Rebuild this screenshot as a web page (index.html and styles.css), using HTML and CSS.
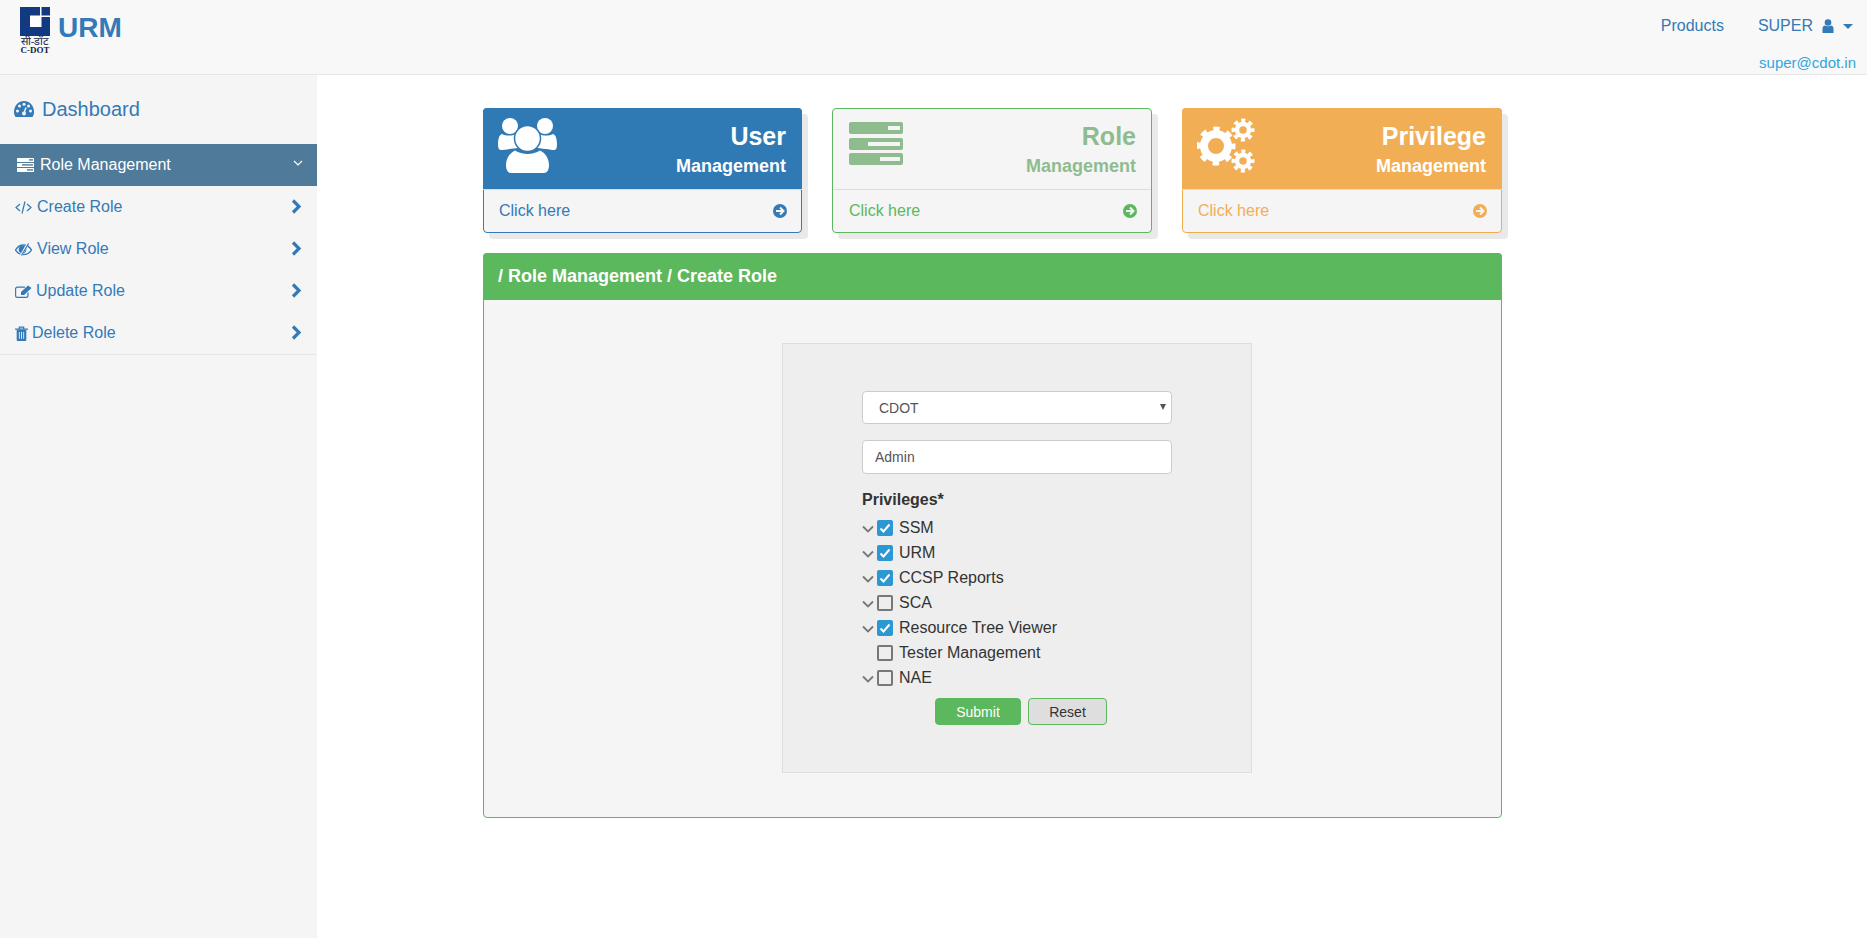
FILE: index.html
```html
<!DOCTYPE html>
<html lang="en">
  <head>
    <meta charset="UTF-8" />
    <meta name="viewport" content="width=device-width, initial-scale=1.0" />
    <title>URM</title>
    <link rel="stylesheet" href="styles.css">
  </head>

  <body>
    <svg class="defs" width="0" height="0">
      <symbol id="i-chevron" viewBox="0 0 11 15">
        <path d="M2 1.500L8 7.500L2 13.500" fill="none" stroke="currentColor" stroke-width="3.200" />
      </symbol>
      <symbol id="i-go" viewBox="0 0 14 14">
        <circle cx="7" cy="7" r="7" fill="currentColor" />
        <path d="M3 7H10M7 3.500L10.500 7L7 10.500" fill="none" stroke="#f5f5f5" stroke-width="2" />
      </symbol>
      <symbol id="i-tree" viewBox="0 0 12 8">
        <path d="M1 1.500L6 6.500L11 1.500" fill="none" stroke="#777" stroke-width="1.800" />
      </symbol>
      <symbol id="i-check" viewBox="0 0 16 16">
        <path d="M3.500 8.500L6.500 11.500L12.500 4.500" fill="none" stroke="#fff" stroke-width="2" />
      </symbol>
    </svg>

    <header class="topbar">
      <div class="brand">
        <div class="logo">
          <svg class="logo-mark" viewBox="0 0 30 29">
            <rect width="30" height="29" fill="#123a80" />
            <rect x="10" y="10" width="10" height="10" fill="#fff" />
            <rect x="20" y="0" width="1.500" height="20" fill="#fff" />
            <rect x="10" y="8.500" width="20" height="1.500" fill="#fff" />
          </svg>
          <span class="logo-hi">सी-डॉट</span>
          <span class="logo-en">C-DOT</span>
        </div>
        <span class="brand-name">URM</span>
      </div>
      <div class="top-right">
        <nav class="top-nav">
          <a href="#">Products</a>
          <a href="#" class="user-link">SUPER
            <svg class="user-icon" viewBox="0 0 12 14">
              <circle cx="6" cy="3.500" r="3.300" fill="currentColor" />
              <path d="M0.500 14V9.500C0.500 7.500 2 6.500 3 6.500C4 7.500 8 7.500 9 6.500C10 6.500 11.500 7.500 11.500 9.500V14Z" fill="currentColor" />
            </svg>
            <span class="caret"></span>
          </a>
        </nav>
        <a href="#" class="email">super@cdot.in</a>
      </div>
    </header>

    <div class="layout">
      <aside class="sidebar">
        <a href="#" class="dash-link">
          <svg class="dash-icon" viewBox="0 0 20 16">
            <path d="M0 11C0 4.500 4.500 0 10 0S20 4.500 20 11C20 13 19.500 14.500 18.500 16H1.500C0.500 14.500 0 13 0 11Z" fill="currentColor" />
            <circle cx="3.500" cy="10" r="1.500" fill="#f5f5f5" />
            <circle cx="5.500" cy="5" r="1.500" fill="#f5f5f5" />
            <circle cx="10" cy="3.200" r="1.500" fill="#f5f5f5" />
            <circle cx="14.500" cy="5" r="1.500" fill="#f5f5f5" />
            <circle cx="16.500" cy="10" r="1.500" fill="#f5f5f5" />
            <path d="M10 12L12 6.500" stroke="#f5f5f5" stroke-width="1.500" />
            <circle cx="10" cy="12.500" r="2" fill="#f5f5f5" />
          </svg>
          Dashboard
        </a>

        <ul class="menu">
          <li class="menu-head">
            <span class="menu-label">
              <svg class="tasks-icon" viewBox="0 0 17 14">
                <rect width="17" height="4" rx="0.500" fill="#fff" />
                <rect y="5" width="17" height="4" rx="0.500" fill="#fff" />
                <rect y="10" width="17" height="4" rx="0.500" fill="#fff" />
                <rect x="12" y="1.200" width="4" height="1.400" fill="#4f7a9a" />
                <rect x="5" y="6.200" width="11" height="1.400" fill="#4f7a9a" />
                <rect x="10" y="11.200" width="6" height="1.400" fill="#4f7a9a" />
              </svg>
              Role Management
            </span>
            <svg class="menu-down" viewBox="0 0 10 6">
              <path d="M1 1L5 5L9 1" fill="none" stroke="#fff" stroke-width="1.200" />
            </svg>
          </li>
          <li class="menu-item">
            <a href="#">
              <svg class="item-icon" viewBox="0 0 17 13">
                <path d="M5 3L1 6.500L5 10M12 3L16 6.500L12 10M10 0.500L7 12.500" fill="none" stroke="currentColor" stroke-width="1.200" />
              </svg>
              Create Role
            </a>
            <svg class="chev"><use href="#i-chevron" /></svg>
          </li>
          <li class="menu-item">
            <a href="#">
              <svg class="item-icon" viewBox="0 0 17 13">
                <path d="M0.500 7C2.500 3.500 5 2 8.500 2C12 2 14.500 3.500 16.500 7C14.500 10 12 11.500 8.500 11.500C5 11.500 2.500 10 0.500 7Z" fill="none" stroke="currentColor" stroke-width="1.300" />
                <circle cx="7.500" cy="6.500" r="3.800" fill="currentColor" />
                <path d="M13 0.500L6 12.500" stroke="#f5f5f5" stroke-width="2.400" />
                <path d="M13.500 0.500L6.500 12.500" stroke="currentColor" stroke-width="1.200" />
              </svg>
              View Role
            </a>
            <svg class="chev"><use href="#i-chevron" /></svg>
          </li>
          <li class="menu-item">
            <a href="#" class="update-link">
              <svg class="item-icon" viewBox="0 0 17 13">
                <path d="M13 7.500V10.500C13 11.700 12.300 12.400 11 12.400H2.500C1.300 12.400 0.600 11.700 0.600 10.500V4C0.600 2.800 1.300 2.100 2.500 2.100H10" fill="none" stroke="currentColor" stroke-width="1.200" />
                <path d="M6 7L13 0.500L16.500 3L9 10H6Z" fill="currentColor" />
              </svg>
              Update Role
            </a>
            <svg class="chev"><use href="#i-chevron" /></svg>
          </li>
          <li class="menu-item">
            <a href="#" class="trash-link">
              <svg class="trash-icon" viewBox="0 0 12 14">
                <path d="M0 3H12M4 3V1H8V3" fill="none" stroke="currentColor" stroke-width="1.200" />
                <path d="M1.500 3.500H10.500V12.500C10.500 13.300 10 14 9.500 14H2.500C2 14 1.500 13.300 1.500 12.500Z" fill="currentColor" />
                <path d="M4 5.500V12M6 5.500V12M8 5.500V12" stroke="#f5f5f5" stroke-width="0.800" />
              </svg>
              Delete Role
            </a>
            <svg class="chev"><use href="#i-chevron" /></svg>
          </li>
        </ul>
      </aside>

      <main class="content">
        <section class="cards">
          <div class="card card-user">
            <div class="card-top">
              <svg class="card-icon" viewBox="0 0 60 56">
                <circle cx="12" cy="8" r="8" fill="#fff" />
                <circle cx="47" cy="8" r="8" fill="#fff" />
                <path d="M0 27C0 21 1 17 4 16C8 18 14 18 18 16L22 30C16 30 6 32 3 32C1 32 0 30 0 27Z" fill="#fff" />
                <path d="M59 27C59 21 58 17 55 16C51 18 45 18 41 16L37 30C43 30 53 32 56 32C58 32 59 30 59 27Z" fill="#fff" />
                <circle cx="29.500" cy="20.500" r="13" fill="#fff" stroke="#2f79b5" stroke-width="1.500" />
                <path d="M8 47C8 40 12 35 17 32.500C24 37 35 37 42 32.500C47 35 51 40 51 47C51 52 49 55 46 55H13C10 55 8 52 8 47Z" fill="#fff" />
              </svg>
              <div class="card-title">
                <strong>User</strong>
                <span>Management</span>
              </div>
            </div>
            <a href="#" class="card-foot">Click here <svg class="go"><use href="#i-go" /></svg></a>
          </div>

          <div class="card card-role">
            <div class="card-top">
              <svg class="card-icon" viewBox="0 0 54 43">
                <rect width="54" height="12" rx="2" fill="#8fbc8f" />
                <rect y="16" width="54" height="12" rx="2" fill="#8fbc8f" />
                <rect y="31" width="54" height="12" rx="2" fill="#8fbc8f" />
                <rect x="39" y="4" width="12" height="4" fill="#f5f5f5" />
                <rect x="19" y="20" width="32" height="4" fill="#f5f5f5" />
                <rect x="31" y="35" width="20" height="4" fill="#f5f5f5" />
              </svg>
              <div class="card-title">
                <strong>Role</strong>
                <span>Management</span>
              </div>
            </div>
            <a href="#" class="card-foot">Click here <svg class="go go-green"><use href="#i-go" /></svg></a>
          </div>

          <div class="card card-priv">
            <div class="card-top">
              <svg class="card-icon" viewBox="0 0 60 54">
                <circle cx="19" cy="27" r="12" fill="none" stroke="#fff" stroke-width="8" />
                <circle cx="19" cy="27" r="17" fill="none" stroke="#fff" stroke-width="5" stroke-dasharray="6.350 7" stroke-dashoffset="3.175" />
                <circle cx="46" cy="11" r="6" fill="none" stroke="#fff" stroke-width="4.500" />
                <circle cx="46" cy="11" r="9.500" fill="none" stroke="#fff" stroke-width="4" stroke-dasharray="4 3.460" stroke-dashoffset="2" />
                <circle cx="46" cy="42" r="6" fill="none" stroke="#fff" stroke-width="4.500" />
                <circle cx="46" cy="42" r="9.500" fill="none" stroke="#fff" stroke-width="4" stroke-dasharray="4 3.460" stroke-dashoffset="2" />
              </svg>
              <div class="card-title">
                <strong>Privilege</strong>
                <span>Management</span>
              </div>
            </div>
            <a href="#" class="card-foot">Click here <svg class="go"><use href="#i-go" /></svg></a>
          </div>
        </section>

        <section class="panel">
          <div class="panel-head">/ Role Management / Create Role</div>
          <div class="panel-body">
            <form class="role-form">
              <div class="select-wrap">
                <select class="field field-select">
                  <option>CDOT</option>
                </select>
              </div>
              <input type="text" class="field field-input" value="Admin" />

              <div class="priv-label">Privileges*</div>
              <ul class="tree">
                <li><svg class="tree-arrow"><use href="#i-tree" /></svg><span class="box on"><svg><use href="#i-check" /></svg></span>SSM</li>
                <li><svg class="tree-arrow"><use href="#i-tree" /></svg><span class="box on"><svg><use href="#i-check" /></svg></span>URM</li>
                <li><svg class="tree-arrow"><use href="#i-tree" /></svg><span class="box on"><svg><use href="#i-check" /></svg></span>CCSP Reports</li>
                <li><svg class="tree-arrow"><use href="#i-tree" /></svg><span class="box"></span>SCA</li>
                <li><svg class="tree-arrow"><use href="#i-tree" /></svg><span class="box on"><svg><use href="#i-check" /></svg></span>Resource Tree Viewer</li>
                <li class="leaf"><span class="box"></span>Tester Management</li>
                <li><svg class="tree-arrow"><use href="#i-tree" /></svg><span class="box"></span>NAE</li>
              </ul>

              <div class="form-btns">
                <button type="button" class="btn btn-submit">Submit</button>
                <button type="button" class="btn btn-reset">Reset</button>
              </div>
            </form>
          </div>
        </section>
      </main>
    </div>
  </body>
</html>
```

FILE: styles.css
```css
* {
  box-sizing: border-box;
}

body {
  margin: 0;
  font-family: "Liberation Sans", Arial, Helvetica, sans-serif;
  font-size: 16px;
  color: #333333;
  background-color: #ffffff;
}

a {
  color: #337ab7;
  text-decoration: none;
}

ul {
  list-style: none;
  margin: 0;
  padding: 0;
}

.defs {
  display: block;
  height: 0;
}

/* top bar */
.topbar {
  display: flex;
  justify-content: space-between;
  height: 75px;
  background-color: #f8f8f8;
  border-bottom: 1px solid #e7e7e7;
}

.brand {
  display: flex;
  padding: 7px 0 0 20px;
}

.logo {
  display: flex;
  flex-direction: column;
  align-items: center;
  width: 30px;
  color: #14213d;
  font-family: "Liberation Serif", serif;
  font-weight: bold;
}

.logo-mark {
  width: 30px;
  height: 29px;
  flex: none;
}

.logo-hi {
  font-size: 11px;
  line-height: 10px;
  font-weight: normal;
  white-space: nowrap;
}

.logo-en {
  font-size: 9px;
  line-height: 9px;
  white-space: nowrap;
}

.brand-name {
  margin: 6px 0 0 8px;
  font-size: 28px;
  line-height: 30px;
  font-weight: bold;
  color: #337ab7;
}

.top-right {
  display: flex;
  flex-direction: column;
  align-items: flex-end;
  padding: 17px 11px 0 0;
}

.top-nav {
  display: flex;
  gap: 34px;
  padding-right: 3px;
  line-height: 18px;
}

.user-link {
  display: flex;
  align-items: center;
  gap: 8px;
}

.user-icon {
  width: 12px;
  height: 14px;
  margin-left: 1px;
}

.caret {
  width: 0;
  height: 0;
  margin-left: 1px;
  border-left: 5px solid transparent;
  border-right: 5px solid transparent;
  border-top: 5px solid #337ab7;
}

.email {
  margin-top: 19px;
  font-size: 15px;
  line-height: 18px;
  color: #31a5dc;
}

/* sidebar */
.layout {
  display: flex;
  min-height: 863px;
}

.sidebar {
  width: 317px;
  flex: none;
  background-color: #f5f5f5;
}

.dash-link {
  display: flex;
  align-items: center;
  gap: 8px;
  height: 69px;
  padding: 0 0 1px 14px;
  font-size: 20px;
}

.dash-icon {
  width: 20px;
  height: 16px;
}

.menu {
  border-bottom: 1px solid #e7e7e7;
}

.menu-head {
  display: flex;
  align-items: center;
  justify-content: space-between;
  height: 42px;
  padding: 0 14px 0 17px;
  color: #ffffff;
  background-color: #4f7a9a;
}

.menu-label {
  display: flex;
  align-items: center;
  gap: 6px;
}

.tasks-icon {
  width: 17px;
  height: 14px;
}

.menu-down {
  width: 10px;
  height: 6px;
  margin-top: -4px;
}

.menu-item {
  display: flex;
  align-items: center;
  justify-content: space-between;
  height: 42px;
  padding: 0 15px;
}

.menu-item a {
  display: flex;
  align-items: center;
  gap: 5px;
}

.item-icon {
  width: 17px;
  height: 13px;
}

.menu-item .update-link {
  gap: 4px;
}

.menu-item .trash-link {
  gap: 4px;
}

.trash-icon {
  width: 13px;
  height: 15px;
}

.chev {
  width: 11px;
  height: 15px;
  margin-top: -2px;
  color: #337ab7;
}

/* main area */
.content {
  width: 1019px;
  margin-left: 166px;
  padding-top: 33px;
}

.cards {
  display: grid;
  grid-template-columns: 319px 320px 320px;
  gap: 30px;
  margin-bottom: 20px;
}

.card {
  height: 125px;
  background-color: #f5f5f5;
  border: 1px solid;
  border-radius: 4px;
  box-shadow: 6px 6px 0 #e9e9e9;
}

.card-top {
  display: flex;
  justify-content: space-between;
  height: 82px;
  padding: 10px 16px 0 15px;
  border-bottom: 1px solid #dddddd;
}

.card-icon {
  flex: none;
  width: 60px;
  height: 56px;
}

.card-title {
  display: flex;
  flex-direction: column;
  align-items: flex-end;
  font-weight: bold;
}

.card-title strong {
  font-size: 25px;
  line-height: 32px;
  margin-top: 2px;
}

.card-title span {
  margin-top: 4px;
  font-size: 18px;
  line-height: 20px;
}

.card-foot {
  display: flex;
  align-items: center;
  justify-content: space-between;
  height: 42px;
  padding: 0 14px 0 15px;
}

.go {
  width: 14px;
  height: 14px;
}

.card-user {
  border-color: #337ab7;
}

.card-user .card-top {
  color: #ffffff;
  background-color: #2f79b5;
  margin: -1px -1px 0;
  border-radius: 4px 4px 0 0;
}

.card-role {
  border-color: #5cb85c;
}

.card-role .card-top {
  height: 81px;
  padding: 9px 15px 0 16px;
  color: #8fbc8f;
}

.card-role .card-foot {
  padding-left: 16px;
  color: #5cb85c;
}

.card-role .card-icon {
  height: 43px;
  margin-top: 4px;
  width: 54px;
}

.card-priv {
  border-color: #f0ad4e;
}

.card-priv .card-top {
  color: #ffffff;
  background-color: #f2ae55;
  margin: -1px -1px 0;
  border-radius: 4px 4px 0 0;
}

.card-priv .card-foot {
  color: #f2ae55;
}

.go-green {
  color: #5cb85c;
}

/* panel */
.panel {
  height: 565px;
  background-color: #f5f5f5;
  border: 1px solid #5cb85c;
  border-radius: 4px;
}

.panel-head {
  height: 47px;
  margin: -1px -1px 0;
  padding: 0 15px;
  line-height: 47px;
  font-size: 18px;
  font-weight: bold;
  color: #ffffff;
  background-color: #5cb85c;
  border-radius: 4px 4px 0 0;
}

.panel-body {
  padding: 43px 0 0 298px;
}

.role-form {
  width: 470px;
  height: 430px;
  padding: 47px 79px 0 79px;
  background-color: #eeeeee;
  border: 1px solid #dddddd;
  font-size: 16px;
}

.field {
  display: block;
  width: 310px;
  height: 33px;
  font-family: inherit;
  color: #555555;
  background-color: #ffffff;
  border: 1px solid #cccccc;
  border-radius: 4px;
}

.select-wrap {
  position: relative;
  margin-bottom: 16px;
}

.select-wrap::after {
  content: "";
  position: absolute;
  right: 6px;
  top: 13px;
  border-left: 3px solid transparent;
  border-right: 3px solid transparent;
  border-top: 6px solid #555555;
}

.field-select {
  appearance: none;
  padding-left: 16px;
  font-size: 14px;
}

.field-input {
  height: 34px;
  padding: 0 12px;
  font-size: 14px;
}

.priv-label {
  margin-top: 16px;
  font-size: 16px;
  line-height: 20px;
  font-weight: bold;
}

.tree {
  margin: 5px 0 0 0;
}

.tree li {
  display: flex;
  align-items: center;
  height: 25px;
}

.tree-arrow {
  width: 12px;
  height: 8px;
  margin: 2px 3px 0 0;
  flex: none;
}

.tree .leaf {
  padding-left: 15px;
}

.box {
  flex: none;
  width: 16px;
  height: 16px;
  margin-right: 6px;
  border: 2px solid #777777;
  border-radius: 2px;
}

.box svg {
  display: block;
  width: 16px;
  height: 16px;
  margin: -2px;
}

.box.on {
  background-color: #2b98d3;
  border-color: #2b98d3;
}

.form-btns {
  display: flex;
  gap: 7px;
  margin: 8px 0 0 73px;
}

.btn {
  height: 27px;
  font-family: inherit;
  font-size: 14px;
  border-radius: 4px;
  border: 1px solid #5cb85c;
}

.btn-submit {
  width: 86px;
  color: #ffffff;
  background-color: #5cb85c;
}

.btn-reset {
  width: 79px;
  color: #333333;
  background-color: #dedede;
}
```
